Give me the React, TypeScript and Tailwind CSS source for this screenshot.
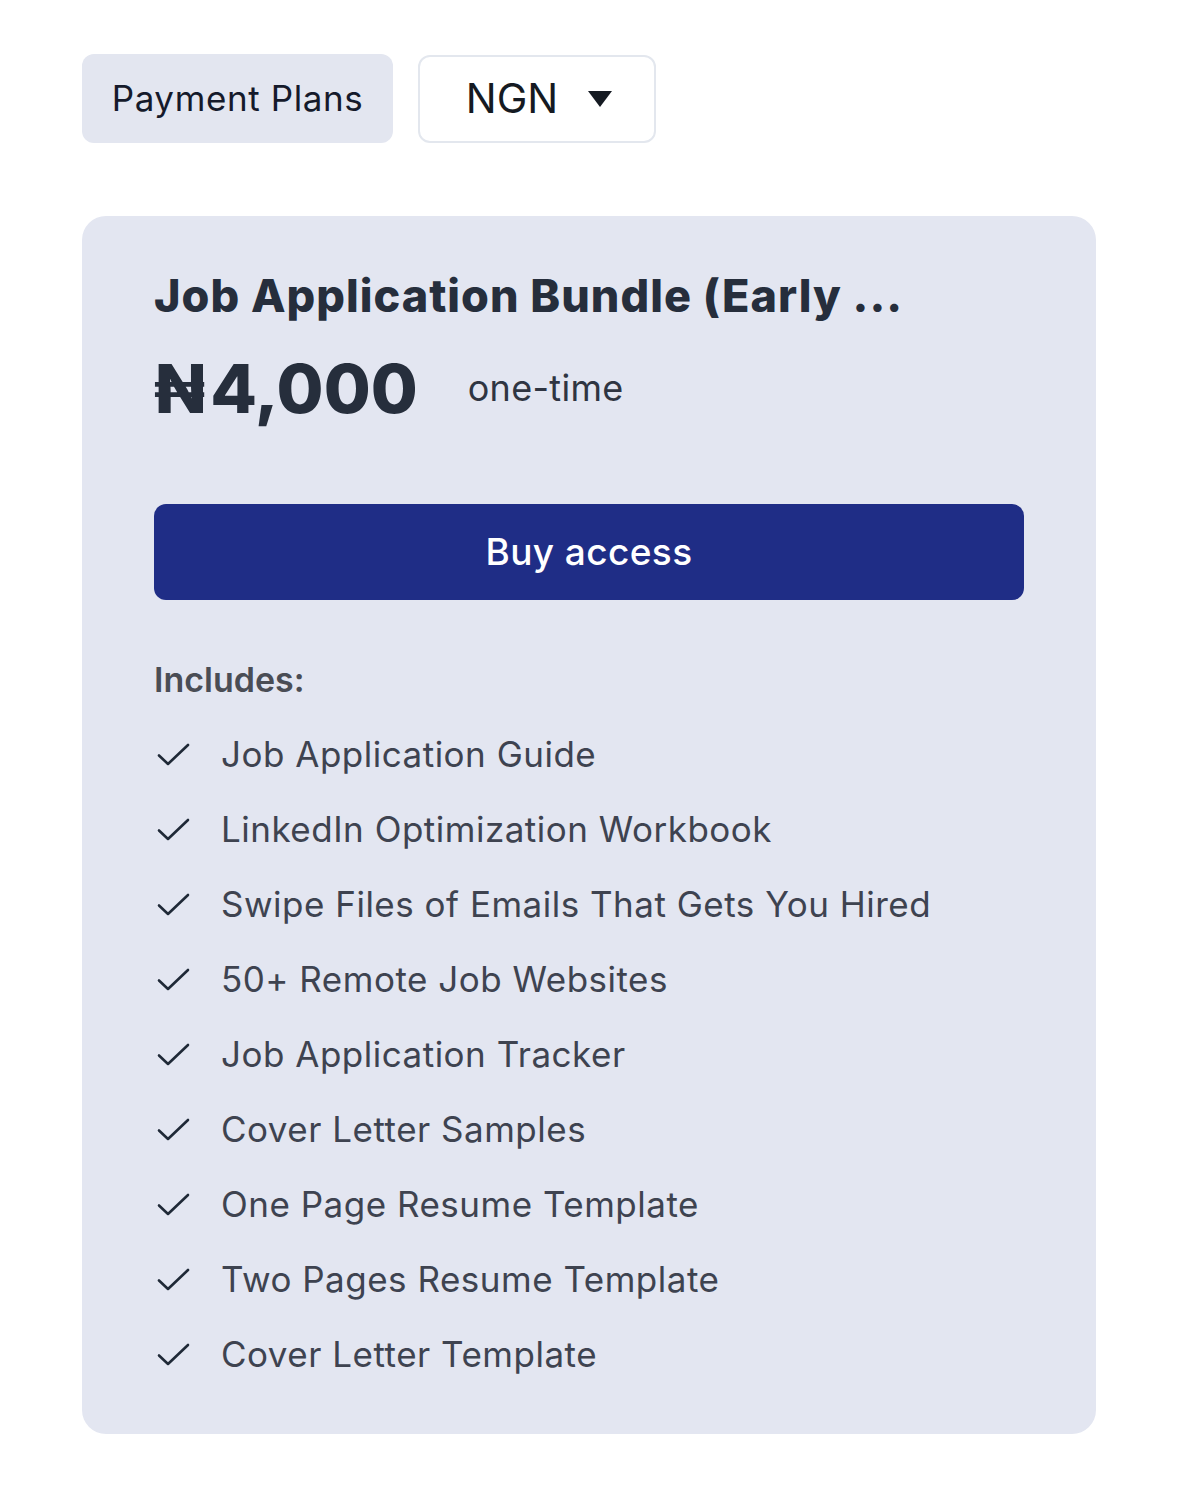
import React from 'react';

const items = [
  'Job Application Guide',
  'LinkedIn Optimization Workbook',
  'Swipe Files of Emails That Gets You Hired',
  '50+ Remote Job Websites',
  'Job Application Tracker',
  'Cover Letter Samples',
  'One Page Resume Template',
  'Two Pages Resume Template',
  'Cover Letter Template',
];

const Check: React.FC = () => (
  <svg width="34" height="34" viewBox="0 0 34 34" fill="none" stroke="#1f2937" strokeWidth="2.6" strokeLinecap="round" strokeLinejoin="round">
    <path d="M2 17.5l9 8.5L31 7" />
  </svg>
);

const App: React.FC = () => {
  return (
    <div className="min-h-[1490px] w-[1179px] bg-white pt-[54px] pl-[82px] font-['Inter',sans-serif]">
      <div className="flex items-center gap-[25px]">
        <div className="h-[89px] w-[311px] rounded-[12px] bg-[#e3e6f0] flex items-center justify-center text-[35px] tracking-[0.6px] text-[#151a2b]">
          Payment Plans
        </div>
        <div className="h-[88px] w-[238px] rounded-[12px] border-2 border-[#e3e7ee] flex items-center justify-center gap-[30px] pl-[4px] text-[41px] text-[#151a22]">
          <span>NGN</span>
          <svg width="24" height="16" viewBox="0 0 24 16"><path d="M0 0h24L12 16z" fill="#151a22" /></svg>
        </div>
      </div>

      <div className="mt-[73px] w-[1014px] rounded-[24px] bg-[#e3e6f1] pl-[72px] pr-[72px] pt-[50px] pb-[42px]">
        <h2 className="text-[45px] font-extrabold leading-[60px] text-[#262e3c] tracking-[1px] whitespace-nowrap">
          Job Application Bundle (Early ...
        </h2>
        <div className="mt-[22px] flex items-center gap-[50px]">
          <span className="text-[68px] font-extrabold leading-[80px] text-[#262e3c]">
            <span className="mr-[5px]">₦</span>4,000
          </span>
          <span className="text-[36px] text-[#2f3542] tracking-[0.3px]">one-time</span>
        </div>
        <button className="mt-[76px] h-[96px] w-full rounded-[12px] bg-[#1f2d86] text-[37px] font-medium tracking-[0.4px] text-white">
          Buy access
        </button>
        <div className="mt-[54px] text-[34px] font-semibold text-[#4a4d55]">Includes:</div>
        <ul className="mt-[12px] flex flex-col">
          {items.map((item) => (
            <li key={item} className="flex items-center h-[75px]">
              <span className="w-[67px] pl-[3px] flex items-center"><Check /></span>
              <span className="text-[35px] text-[#3e4350] tracking-[0.5px]">{item}</span>
            </li>
          ))}
        </ul>
      </div>
    </div>
  );
};

export default App;
